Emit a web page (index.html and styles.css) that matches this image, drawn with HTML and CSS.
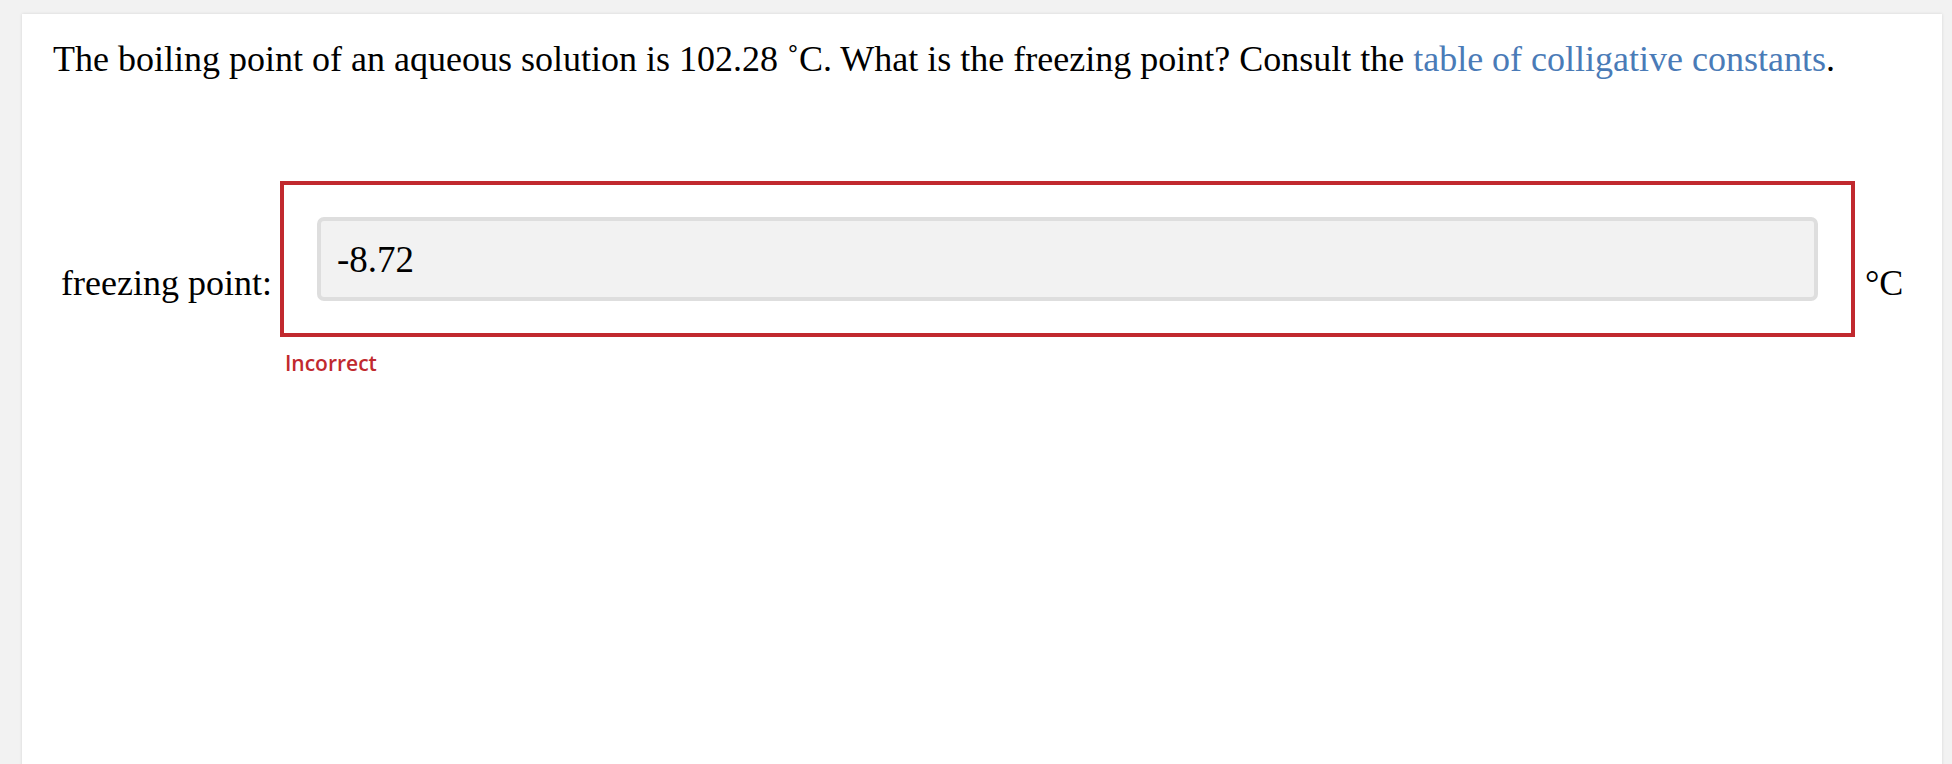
FILE: index.html
```html
<!DOCTYPE html>
<html>
<head>
<meta charset="utf-8">
<link rel="stylesheet" href="styles.css">
</head>
<body>
<div class="card">
  <p class="question">The boiling point of an aqueous solution is 102.28 ˚C. What is the freezing point? Consult the <a class="link" href="#">table of colligative constants</a>.</p>
  <div class="answer-row">
    <span class="label">freezing point:</span>
    <div class="field">
      <div class="field-box">
        <div class="input">-8.72</div>
      </div>
      <div class="feedback">Incorrect</div>
    </div>
    <span class="unit">°C</span>
  </div>
</div>
</body>
</html>
```
FILE: styles.css
```css
html, body {
  margin: 0;
  padding: 0;
  background: #f2f2f2;
  height: 100%;
  overflow: hidden;
}
.card {
  margin: 14px 10px 0 22px;
  width: 1920px;
  height: 760px;
  box-sizing: border-box;
  background: #fff;
  box-shadow: 0 0 3px rgba(0,0,0,0.12);
  padding: 26px 0 0 31px;
  font-family: "Liberation Serif", "Times New Roman", serif;
  color: #000;
}
.question {
  margin: 0;
  font-size: 36px;
  line-height: 39px;
}
.link {
  color: #4a7bb7;
  text-decoration: none;
}
.answer-row {
  display: flex;
  align-items: flex-start;
  margin-top: 102px;
  padding-left: 8px;
}
.label, .unit {
  font-size: 36px;
  line-height: 39px;
  margin-top: 83px;
}
.label {
  margin-right: 8px;
}
.unit {
  margin-left: 10px;
}
.field {
  display: flex;
  flex-direction: column;
}
.field-box {
  width: 1575px;
  box-sizing: border-box;
  border: 4px solid #c1292e;
  padding: 32px 33px;
}
.input {
  height: 84px;
  box-sizing: border-box;
  background: #f2f2f2;
  border: 4px solid #dedede;
  border-radius: 7px;
  padding: 19px 0 0 16px;
  font-size: 37px;
  line-height: 39px;
}
.feedback {
  font-family: "Open Sans", "Liberation Sans", sans-serif;
  font-weight: 600;
  font-size: 21px;
  color: #c1292e;
  margin: 12px 0 0 5px;
  line-height: 28px;
}
```
